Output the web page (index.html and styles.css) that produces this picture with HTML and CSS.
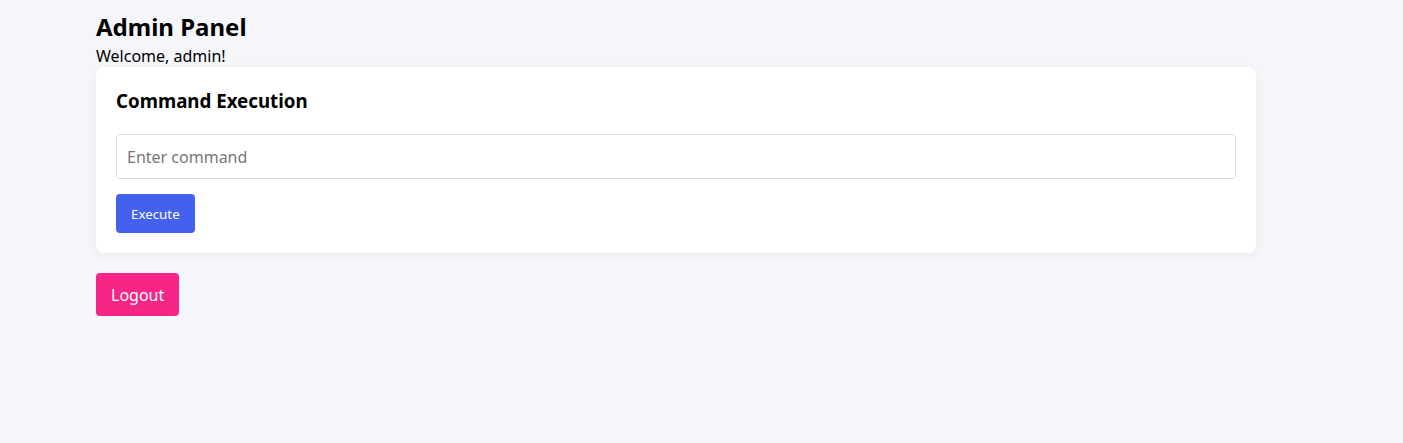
FILE: index.html
```html
<!DOCTYPE html>
<html>
<head>
<meta charset="utf-8">
<link rel="stylesheet" href="styles.css">
</head>
<body>
<div class="container">
  <h1 class="title">Admin Panel</h1>
  <p class="welcome">Welcome, admin!</p>
  <div class="card">
    <h2 class="card-title">Command Execution</h2>
    <input class="cmd-input" type="text" placeholder="Enter command">
    <button class="btn btn-exec">Execute</button>
  </div>
  <button class="btn btn-logout">Logout</button>
</div>
</body>
</html>
```
FILE: styles.css
```css
html, body {
  margin: 0;
  padding: 0;
  background: #f5f6fa;
  font-family: "Noto Sans", sans-serif;
  color: #000;
}
.container {
  width: 1160px;
  margin-left: 96px;
  padding-top: 10px;
  display: flex;
  flex-direction: column;
  align-items: flex-start;
}
.title {
  margin: 0 0 2px;
  font-size: 24px;
  font-weight: 700;
  line-height: 33px;
}
.welcome {
  margin: 0;
  font-size: 16px;
  line-height: 22px;
}
.card {
  align-self: stretch;
  background: #fff;
  border-radius: 8px;
  box-shadow: 0 2px 8px rgba(0,0,0,0.06);
  padding: 20px;
  display: flex;
  flex-direction: column;
  align-items: flex-start;
}
.card-title {
  margin: 0 0 20px;
  font-size: 18.72px;
  font-weight: 700;
  line-height: 27px;
}
.cmd-input {
  align-self: stretch;
  box-sizing: border-box;
  height: 45px;
  border: 1px solid #dcdcdc;
  border-radius: 4px;
  padding: 0 10px;
  font-family: "Noto Sans", sans-serif;
  font-size: 16px;
  color: #000;
  margin-bottom: 15px;
}
.cmd-input::placeholder {
  color: #777;
}
.btn {
  border: none;
  border-radius: 4px;
  color: #fff;
  font-family: "Noto Sans", sans-serif;
  cursor: pointer;
}
.btn-exec {
  background: #4361ee;
  font-size: 13.33px;
  height: 39px;
  padding: 0 15px;
}
.btn-logout {
  margin-top: 20px;
  background: #f72585;
  font-size: 16px;
  height: 43px;
  padding: 0 15px;
}
```
